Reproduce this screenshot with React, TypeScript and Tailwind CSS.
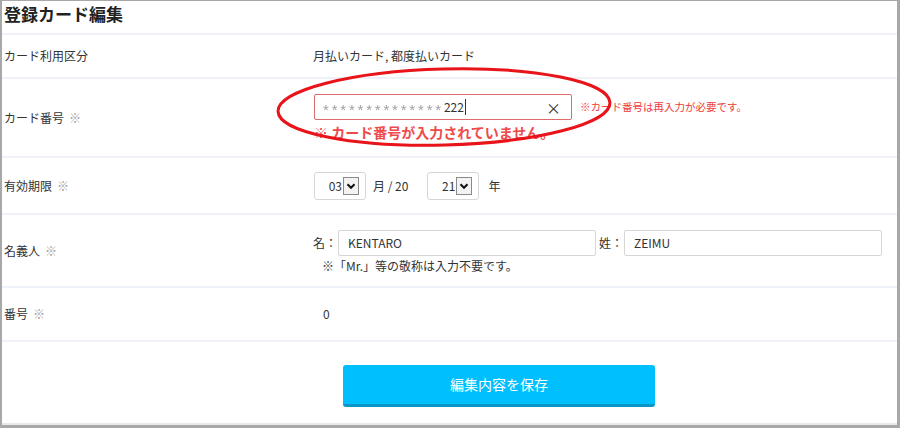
import React from 'react'

const font = { fontFamily: '"Noto Sans CJK JP", "Noto Sans", sans-serif' }

function Chevron() {
  return (
    <span className="flex h-[18px] w-[16px] items-center justify-center border border-[#8a8a8a] bg-[#f3f3f3]">
      <svg className="h-[10px] w-[10px]" viewBox="0 0 10 10" fill="none" stroke="#111" strokeWidth={2}>
        <path d="M1.5 3.2 L5 6.8 L8.5 3.2" />
      </svg>
    </span>
  )
}

function SelectBox({ value }: { value: string }) {
  return (
    <div className="flex h-[28px] w-[52px] items-center justify-end gap-[1px] rounded-[3px] border border-[#d6d6d6] bg-white pr-[6px] text-[12px] text-[#333]">
      <span>{value}</span>
      <Chevron />
    </div>
  )
}

function Label({ text, required }: { text: string; required?: boolean }) {
  return (
    <div className="flex items-center pl-[2px] text-[12px] text-[#333]">
      {text}
      {required && <span className="ml-[5px] text-[#9a9a9a]">※</span>}
    </div>
  )
}

export default function App() {
  return (
    <div
      className="relative flex h-[428px] w-[900px] flex-col overflow-hidden border-t border-l-2 border-r-[3px] border-b-[3px] border-[#a8a8a8] bg-white"
      style={font}
    >
      {/* title */}
      <div className="flex h-[34px] shrink-0 items-center border-b-2 border-[#eef2f8] pl-[2px] pb-[6px] text-[17px] font-bold text-[#222]">
        登録カード編集
      </div>

      {/* usage */}
      <div className="grid h-[44px] shrink-0 grid-cols-[311px_1fr] border-b-2 border-[#eef2f8]">
        <Label text="カード利用区分" />
        <div className="flex items-center text-[12px] text-[#333]">月払いカード, 都度払いカード</div>
      </div>

      {/* card number */}
      <div className="grid h-[79px] shrink-0 grid-cols-[311px_1fr] border-b-2 border-[#eef2f8]">
        <Label text="カード番号" required />
        <div className="flex flex-col pt-[15px] pl-[1px]">
          <div className="flex items-center">
            <div className="flex h-[26px] w-[258px] items-center rounded-[2px] border border-[#dc6b6b] bg-white pl-[8px] pr-[10px] text-[12px]">
              <span className="mt-[5px] font-['Liberation_Sans',sans-serif] text-[15px] leading-none tracking-[2.8px] text-[#a0a0a0] blur-[0.5px]">**************</span>
              <span className="text-[#333]">222</span>
              <span className="ml-[1px] h-[16px] w-px bg-[#333]" />
              <span className="ml-auto text-[15px] leading-none text-[#333]">×</span>
            </div>
            <span className="ml-[8px] text-[10.5px] text-[#ee3b3b]">※カード番号は再入力が必要です。</span>
          </div>
          <div className="mt-[2px] text-[14px] font-bold text-[#ee4a4a]">※ カード番号が入力されていません。</div>
        </div>
      </div>

      {/* expiry */}
      <div className="grid h-[57px] shrink-0 grid-cols-[311px_1fr] border-b-2 border-[#eef2f8]">
        <Label text="有効期限" required />
        <div className="flex items-center pl-[1px] text-[12px] text-[#333]">
          <SelectBox value="03" />
          <span className="ml-[7px]">月 / 20</span>
          <div className="ml-[19px]">
            <SelectBox value="21" />
          </div>
          <span className="ml-[9px]">年</span>
        </div>
      </div>

      {/* holder */}
      <div className="grid h-[73px] shrink-0 grid-cols-[311px_1fr] border-b-2 border-[#eef2f8]">
        <Label text="名義人" required />
        <div className="flex flex-col pt-[15px] text-[12px] text-[#333]">
          <div className="flex items-center">
            <span className="w-[25px]">名：</span>
            <div className="flex h-[26px] w-[258px] items-center rounded-[2px] border border-[#d6d6d6] pl-[9px]">KENTARO</div>
            <span className="ml-[3px] w-[25px]">姓：</span>
            <div className="flex h-[26px] w-[258px] items-center rounded-[2px] border border-[#d6d6d6] pl-[9px]">ZEIMU</div>
          </div>
          <div className="mt-[1px] pl-[9px]">※「Mr.」等の敬称は入力不要です。</div>
        </div>
      </div>

      {/* number */}
      <div className="grid h-[54px] shrink-0 grid-cols-[311px_1fr] border-b-2 border-[#eef2f8]">
        <Label text="番号" required />
        <div className="flex items-center pl-[10px] text-[12px] text-[#333]">0</div>
      </div>

      {/* save */}
      <div className="flex flex-1 flex-col border-b-2 border-[#e6ebe8]">
        <button className="mt-[23px] ml-[341px] h-[42px] w-[312px] rounded-[3px] border-b-[3px] border-[#0a97c8] bg-[#00bfff] text-[14px] text-white">
          編集内容を保存
        </button>
      </div>

      {/* annotation ellipse */}
      <svg className="pointer-events-none absolute left-0 top-0" width="900" height="428" viewBox="0 0 900 428">
        <ellipse cx="442" cy="106" rx="166" ry="38" fill="none" stroke="#e8141a" strokeWidth="3" transform="rotate(-1.5 442 106)" />
      </svg>
    </div>
  )
}
